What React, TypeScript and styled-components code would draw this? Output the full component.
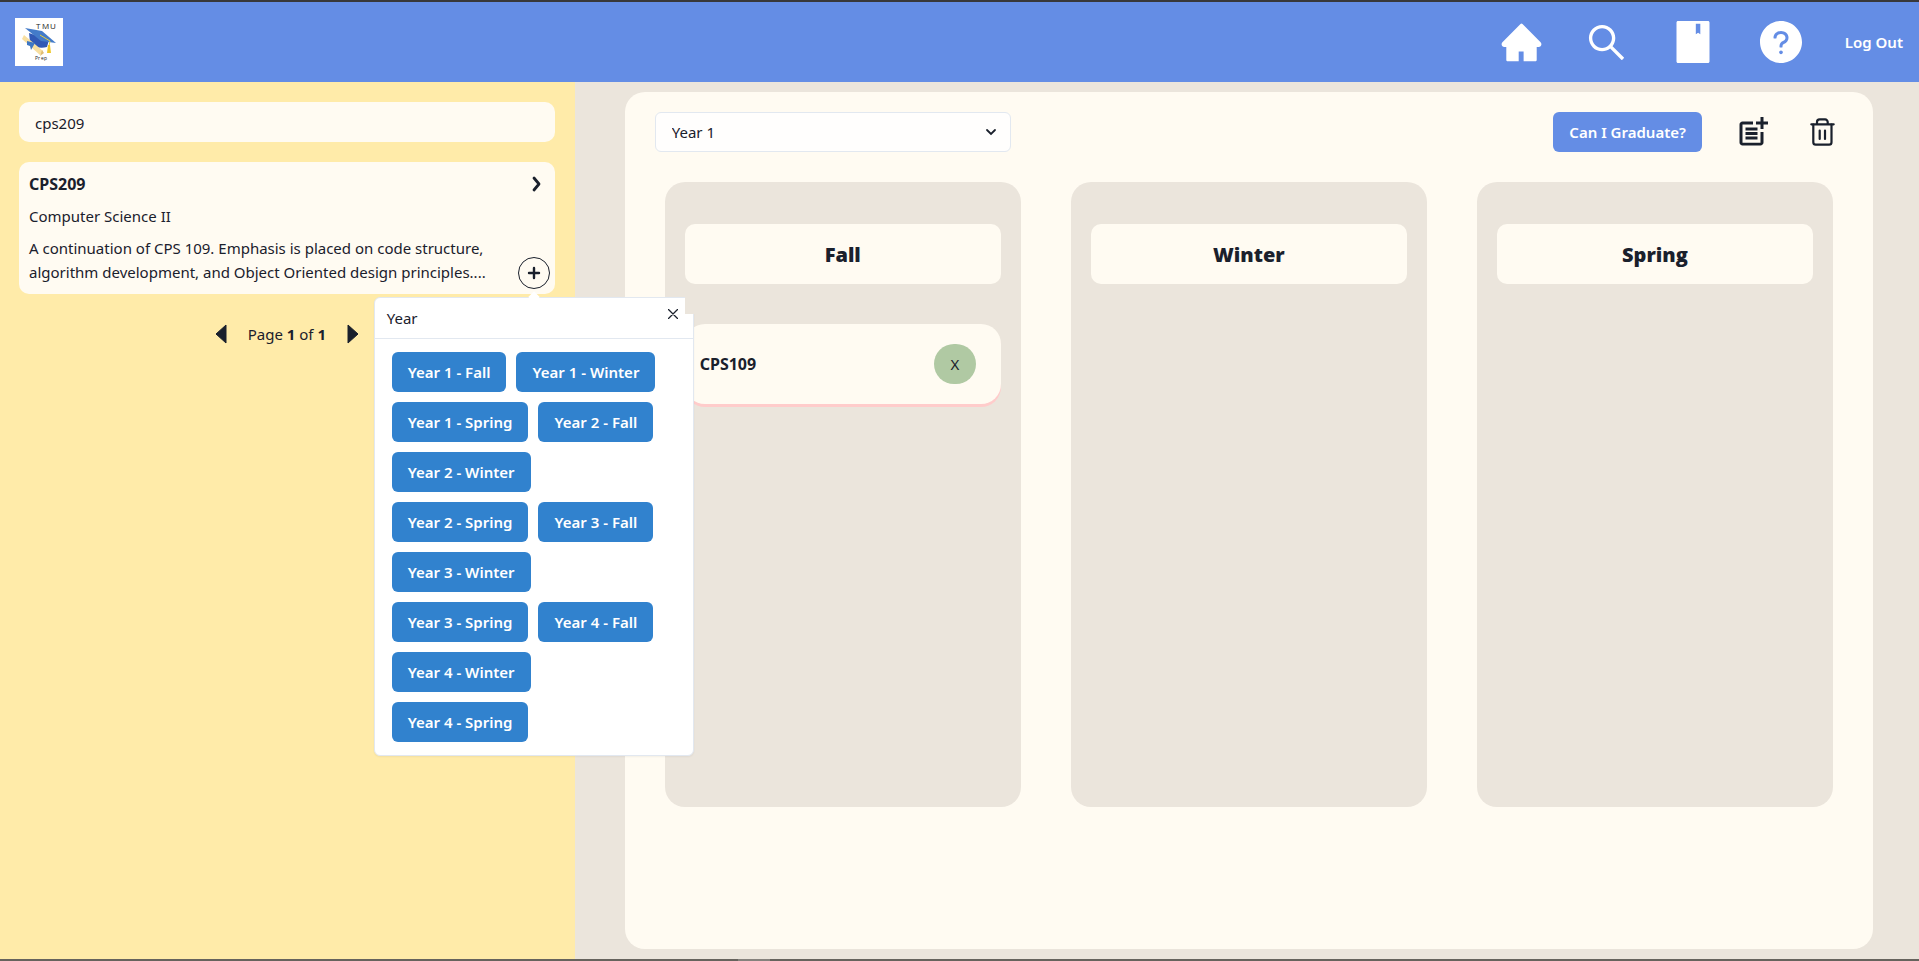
import React from "react";
import styled, { createGlobalStyle } from "styled-components";
import { AiFillHome, AiOutlineSearch, AiFillBook, AiFillQuestionCircle } from "react-icons/ai";
import { MdOutlinePostAdd } from "react-icons/md";

const GlobalStyle = createGlobalStyle`
  * { box-sizing: border-box; }
  body {
    margin: 0;
    background: #ebe5dc;
    color: #1a202c;
    font-family: "Segoe UI", "Noto Sans", "Open Sans", sans-serif;
    font-size: 15px;
    line-height: 24px;
  }
  button, input, select { font: inherit; color: inherit; }
  button { border: 0; padding: 0; background: none; cursor: pointer; }
  h1, h2, h3, p { margin: 0; }
`;

const Page = styled.div`
  display: flex;
  flex-direction: column;
  min-height: 100vh;
  border-top: 2px solid #38383a;
`;

const NavBar = styled.header`
  display: flex;
  align-items: center;
  justify-content: space-between;
  height: 80px;
  padding: 0 16px 0 15px;
  background: #648de5;
  color: #fff;
`;

const Logo = styled.svg`
  display: block;
  width: 48px;
  height: 48px;
`;

const NavLinks = styled.nav`
  display: flex;
  align-items: center;
  gap: 40px;
`;

const NavLink = styled.a<{ $size: number }>`
  display: flex;
  color: #fff;
  font-size: ${(p) => p.$size}px;
`;

const LogOut = styled.button`
  color: #fff;
  font-weight: 600;
`;

const Main = styled.main`
  display: flex;
  flex: 1;
`;

const Sidebar = styled.aside`
  width: calc(30% - 1px);
  padding: 20px 20px 20px 19px;
  background: #ffeba9;
`;

const SearchInput = styled.input`
  display: block;
  width: 100%;
  height: 40px;
  padding: 2px 16px 0;
  border: 0;
  border-radius: 10px;
  background: #fffbf2;
`;

const Result = styled.article`
  position: relative;
  display: grid;
  grid-template-columns: 1fr 32px;
  height: 132px;
  margin-top: 20px;
  padding: 10px 5px 10px 10px;
  border-radius: 10px;
  background: #fffbf2;
`;

const ResultText = styled.div`
  display: flex;
  flex-direction: column;
  gap: 8px;
  min-width: 0;
`;

const CourseCode = styled.h3`
  font-size: 16px;
  line-height: 24px;
  font-weight: 700;
`;

const Description = styled.p`
  max-width: 470px;
`;

const ResultActions = styled.div`
  display: flex;
  flex-direction: column;
  justify-content: space-between;
  align-items: center;
  margin-bottom: -5px;
`;

const IconButton = styled.button`
  display: flex;
  align-items: center;
  justify-content: center;
  width: 24px;
  height: 24px;
`;

const AddButton = styled(IconButton)`
  width: 32px;
  height: 32px;
  border: 1px solid #1a202c;
  border-radius: 50%;
`;

const Pagination = styled.div`
  display: flex;
  align-items: center;
  justify-content: center;
  gap: 15px;
  margin-top: 28px;
`;

const Popover = styled.section`
  position: absolute;
  z-index: 10;
  top: 135px;
  right: -139px;
  width: 320px;
  border: 1px solid #e2e8f0;
  border-radius: 6px;
  background: #fff;
  box-shadow: 0 1px 2px rgba(0, 0, 0, 0.05);

  &::before {
    content: "";
    position: absolute;
    top: -5px;
    left: 155px;
    width: 8px;
    height: 8px;
    background: #fff;
    transform: rotate(45deg);
  }
`;

const PopoverHeader = styled.header`
  display: flex;
  justify-content: space-between;
  height: 41px;
  padding: 8px 8px 8px 12px;
  border-bottom: 1px solid #e2e8f0;
`;

const CloseButton = styled(IconButton)`
  height: 16px;
`;

const TermList = styled.div`
  display: flex;
  flex-wrap: wrap;
  gap: 10px;
  padding: 13px 17px;
`;

const SolidButton = styled.button<{ $tone: string }>`
  height: 40px;
  padding: 0 16px;
  border-radius: 6px;
  background: ${(p) => p.$tone};
  color: #fff;
  font-weight: 600;
  white-space: nowrap;
`;

const PlannerArea = styled.div`
  display: flex;
  flex: 1;
  padding: 10px 46px 10px 50px;
`;

const Planner = styled.section`
  flex: 1;
  padding: 20px 40px;
  border-radius: 20px;
  background: #fffbf2;
`;

const Toolbar = styled.div`
  display: grid;
  grid-template-columns: repeat(3, 1fr);
  column-gap: 50px;
  align-items: center;
  margin: 0 10px 30px -10px;
`;

const SelectBox = styled.div`
  display: grid;
  align-items: center;

  > * { grid-area: 1 / 1; }
  svg { justify-self: end; margin-right: 12px; pointer-events: none; }
`;

const YearSelect = styled.select`
  width: 100%;
  height: 40px;
  padding: 0 16px;
  border: 1px solid #e2e8f0;
  border-radius: 6px;
  background: #fffefd;
  appearance: none;
`;

const ToolActions = styled.div`
  display: flex;
  grid-column: 3;
  align-items: center;
  justify-content: flex-end;
  gap: 32px;
  margin-right: -19px;
`;

const ToolButton = styled(IconButton)`
  width: 38px;
  height: 38px;
`;

const Seasons = styled.div`
  display: grid;
  grid-template-columns: repeat(3, 1fr);
  gap: 50px;
`;

const Season = styled.section`
  min-height: 625px;
  padding: 42px 20px;
  border-radius: 20px;
  background: #ebe5dc;
`;

const SeasonHead = styled.div`
  position: relative;
  z-index: 20;
  padding-bottom: 30px;
  background: #ebe5dc;
`;

const SeasonTitle = styled.h2`
  height: 60px;
  padding-top: 1px;
  border-radius: 10px;
  background: #fffbf2;
  font-family: "Segoe UI", "Open Sans", sans-serif;
  font-size: 20px;
  line-height: 60px;
  font-weight: 800;
  text-align: center;
`;

const Course = styled.article`
  display: flex;
  align-items: center;
  justify-content: space-between;
  height: 80px;
  margin-top: 10px;
  padding: 0 25px 0 15px;
  border-radius: 20px;
  background: #fffbf2;
  box-shadow: 0 3px 0 #ffcccb;
`;

const RemoveButton = styled.button`
  width: 42px;
  height: 40px;
  border-radius: 20px;
  background: #b0c9a3;
`;

const Taskbar = styled.div`
  display: flex;
  height: 2px;
  padding-left: 738px;
  background: #66635d;

  &::before {
    content: "";
    width: 32px;
    background: #85827d;
  }
`;

const LogoText = styled.text`
  fill: #222;
  font-family: "Open Sans", sans-serif;
`;

const LogoMark = () => (
  <Logo viewBox="0 0 48 48" role="img" aria-label="TMU Prep">
    <rect width="48" height="48" fill="#fff" />
    <path d="M14 15l1 9q7 8 17 5l2-7z" fill="#3159b5" />
    <path d="M10 10l17 3 14 12-15-2z" fill="#437bc9" />
    <path d="M9 17l19 16-3 4L7 21z" fill="#f8dfa0" />
    <path d="M27 32l2 3-4 3z" fill="#e0bd72" />
    <path d="M12 23l8 2-4 7-1-4-3-1z" fill="#3f77c4" />
    <path d="M25 17l10 6-1 5" fill="none" stroke="#e6ce3c" />
    <path d="M33 27h2l1 8h-4z" fill="#eec82d" />
    <LogoText x="21 27 35" y="11" fontSize="8">TMU</LogoText>
    <LogoText x="20 23 26 29" y="42" fontSize="5">Prep</LogoText>
  </Logo>
);

const TrashIcon = () => (
  <svg width="25" height="28" viewBox="0 0 25 28" fill="none" stroke="currentColor" strokeWidth="2.2" strokeLinecap="round">
    <path d="M7 6V4a2.6 2.6 0 0 1 2.6-2.6h5.5A2.6 2.6 0 0 1 17.7 4v2" />
    <path d="M1.3 6.3h22.4" />
    <path d="M3.3 6.5v17.7a2.4 2.4 0 0 0 2.4 2.4h13.4a2.4 2.4 0 0 0 2.4-2.4V6.5" />
    <path d="M9.7 12.5v8.5M15 12.5v8.5" />
  </svg>
);

const terms = [1, 2, 3, 4].flatMap((y) => ["Fall", "Winter", "Spring"].map((s) => `Year ${y} - ${s}`));

export default function App() {
  return (
    <>
      <GlobalStyle />
      <Page>
        <NavBar>
          <LogoMark />
          <NavLinks>
            <NavLink $size={45} href="#home" aria-label="Home"><AiFillHome /></NavLink>
            <NavLink $size={45} href="#search" aria-label="Search"><AiOutlineSearch /></NavLink>
            <NavLink $size={48} href="#courses" aria-label="Courses"><AiFillBook /></NavLink>
            <NavLink $size={48} href="#help" aria-label="Help"><AiFillQuestionCircle /></NavLink>
            <LogOut>Log Out</LogOut>
          </NavLinks>
        </NavBar>
        <Main>
          <Sidebar>
            <SearchInput aria-label="Search courses" defaultValue="cps209" />
            <Result>
              <ResultText>
                <CourseCode>CPS209</CourseCode>
                <p>Computer Science II</p>
                <Description>
                  A continuation of CPS 109. Emphasis is placed on code structure, algorithm
                  development, and Object Oriented design principles....
                </Description>
              </ResultText>
              <ResultActions>
                <IconButton aria-label="Show details">
                  <svg width="24" height="24" viewBox="0 0 24 24">
                    <path d="M12 6l5 6-5 6" fill="none" stroke="currentColor" strokeWidth="2.8" strokeLinecap="round" strokeLinejoin="round" />
                  </svg>
                </IconButton>
                <AddButton aria-label="Add course">
                  <svg width="14" height="14" viewBox="0 0 14 14">
                    <path d="M7 2v10M2 7h10" stroke="currentColor" strokeWidth="2.4" strokeLinecap="round" />
                  </svg>
                </AddButton>
              </ResultActions>
              <Popover>
                <PopoverHeader>
                  Year
                  <CloseButton aria-label="Close">
                    <svg width="10" height="10" viewBox="0 0 10 10">
                      <path d="M0.5 0.5l9 9M9.5 0.5l-9 9" stroke="currentColor" strokeWidth="1.3" strokeLinecap="round" />
                    </svg>
                  </CloseButton>
                </PopoverHeader>
                <TermList>
                  {terms.map((t) => (
                    <SolidButton key={t} $tone="#3182ce">{t}</SolidButton>
                  ))}
                </TermList>
              </Popover>
            </Result>
            <Pagination>
              <IconButton aria-label="Previous page">
                <svg width="12" height="20" viewBox="0 0 12 20"><path d="M11 1v18L1 10z" fill="currentColor" stroke="currentColor" strokeLinejoin="round" /></svg>
              </IconButton>
              <span>Page <b>1</b> of <b>1</b></span>
              <IconButton aria-label="Next page">
                <svg width="12" height="20" viewBox="0 0 12 20"><path d="M1 1v18l10-9z" fill="currentColor" stroke="currentColor" strokeLinejoin="round" /></svg>
              </IconButton>
            </Pagination>
          </Sidebar>
          <PlannerArea>
            <Planner>
              <Toolbar>
                <SelectBox>
                  <YearSelect aria-label="Year" defaultValue="1">
                    <option value="1">Year 1</option>
                    <option value="2">Year 2</option>
                    <option value="3">Year 3</option>
                    <option value="4">Year 4</option>
                  </YearSelect>
                  <svg width="14" height="14" viewBox="0 0 14 14">
                    <path d="M2 5l4 4 4-4" fill="none" stroke="currentColor" strokeWidth="1.8" strokeLinecap="round" />
                  </svg>
                </SelectBox>
                <ToolActions>
                  <SolidButton $tone="#648de5">Can I Graduate?</SolidButton>
                  <ToolButton aria-label="Add plan"><MdOutlinePostAdd size={36} /></ToolButton>
                  <ToolButton aria-label="Delete plan"><TrashIcon /></ToolButton>
                </ToolActions>
              </Toolbar>
              <Seasons>
                {["Fall", "Winter", "Spring"].map((name) => (
                  <Season key={name}>
                    <SeasonHead><SeasonTitle>{name}</SeasonTitle></SeasonHead>
                    {name === "Fall" && (
                      <Course>
                        <CourseCode>CPS109</CourseCode>
                        <RemoveButton aria-label="Remove CPS109">X</RemoveButton>
                      </Course>
                    )}
                  </Season>
                ))}
              </Seasons>
            </Planner>
          </PlannerArea>
        </Main>
        <Taskbar />
      </Page>
    </>
  );
}
